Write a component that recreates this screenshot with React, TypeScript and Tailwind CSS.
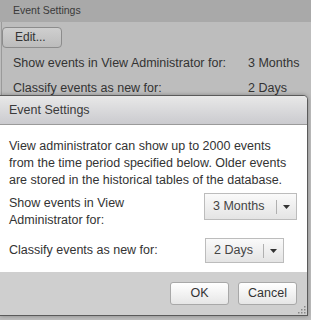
export default function App() {
  const font = { fontFamily: '"Liberation Sans", Arial, sans-serif' };
  return (
    <div className="relative h-[320px] w-[311px] overflow-hidden bg-[#bdbdbd] text-[#333]" style={font}>
      <div className="flex h-[22px] items-center bg-[#a9a9a9] pl-[13px] text-[10.5px] text-[#3a3a3a]">Event Settings</div>
      <div className="ml-[1px] border-l border-[#9a9a9a]">
        <div className="pt-[2px]">
          <button className="h-[21px] w-[60px] rounded-[4px] border border-[#8c8c8c] bg-gradient-to-b from-[#cfcfcf] to-[#bcbcbc] pl-[12px] text-left text-[12px] text-[#333]">Edit...</button>
        </div>
        <div className="flex pl-[11px] pt-[7px] text-[12.5px] leading-[17px]">
          <span className="w-[235px]">Show events in View Administrator for:</span>
          <span>3 Months</span>
        </div>
        <div className="flex pl-[11px] pt-[8px] text-[12.5px] leading-[17px]">
          <span className="w-[235px]">Classify events as new for:</span>
          <span>2 Days</span>
        </div>
      </div>

      <div className="absolute left-0 top-[95px] w-[308px] overflow-hidden rounded-tr-[5px] border-b border-r border-t border-[#5a5a5a] bg-white shadow-[0_0_4px_rgba(0,0,0,0.3)]">
        <div className="flex h-[29px] items-center border-b border-[#9a9a9a] bg-gradient-to-b from-[#e8e8e8] to-[#cbcbcf] pl-[9px] text-[12.5px] text-[#3a3a3a]">Event Settings</div>
        <div className="px-[9px] pt-[13px] text-[12.5px] leading-[17px] text-[#333]">
          <p>View administrator can show up to 2000 events from the time period specified below. Older events are stored in the historical tables of the database.</p>
          <div className="mt-[4px] flex items-start justify-between pr-[1px]">
            <span className="w-[150px] pt-[2px]">Show events in View Administrator for:</span>
            <Select label="3 Months" width="w-[93px]" height="h-[27px]" />
          </div>
          <div className="mt-[9px] flex items-center pb-[9px]">
            <span className="w-[196px]">Classify events as new for:</span>
            <Select label="2 Days" width="w-[79px]" height="h-[25px]" />
          </div>
        </div>
        <div className="relative flex h-[43px] items-center justify-end gap-[9px] bg-[#cfcfcf] pr-[10px]">
          <button className="h-[23px] w-[59px] rounded-[3px] border border-[#a8a8a8] bg-gradient-to-b from-[#ffffff] to-[#e6e6e6] text-[12.5px] text-[#333]">OK</button>
          <button className="h-[23px] w-[59px] rounded-[3px] border border-[#a8a8a8] bg-gradient-to-b from-[#ffffff] to-[#e6e6e6] text-[12.5px] text-[#333]">Cancel</button>
          <svg className="absolute bottom-[1px] right-[1px]" width="8" height="8" viewBox="0 0 8 8">
            <rect x="6" y="0" width="1.5" height="1.5" fill="#888" />
            <rect x="3" y="3" width="1.5" height="1.5" fill="#888" />
            <rect x="6" y="3" width="1.5" height="1.5" fill="#888" />
            <rect x="0" y="6" width="1.5" height="1.5" fill="#888" />
            <rect x="3" y="6" width="1.5" height="1.5" fill="#888" />
            <rect x="6" y="6" width="1.5" height="1.5" fill="#888" />
          </svg>
        </div>
      </div>
    </div>
  );
}

function Select({ label, width, height }: { label: string; width: string; height: string }) {
  return (
    <div className={`${width} ${height} flex items-center border border-[#bcbcbc] bg-gradient-to-b from-[#fafafa] to-[#e4e4e4] text-[12.5px] text-[#444]`}>
      <span className="flex-1 pl-[8px]">{label}</span>
      <span className="h-[14px] w-px bg-[#b0b0b0]" />
      <svg className="mx-[6px]" width="7" height="4" viewBox="0 0 7 4"><path d="M0 0h7L3.5 4z" fill="#333" /></svg>
    </div>
  );
}
